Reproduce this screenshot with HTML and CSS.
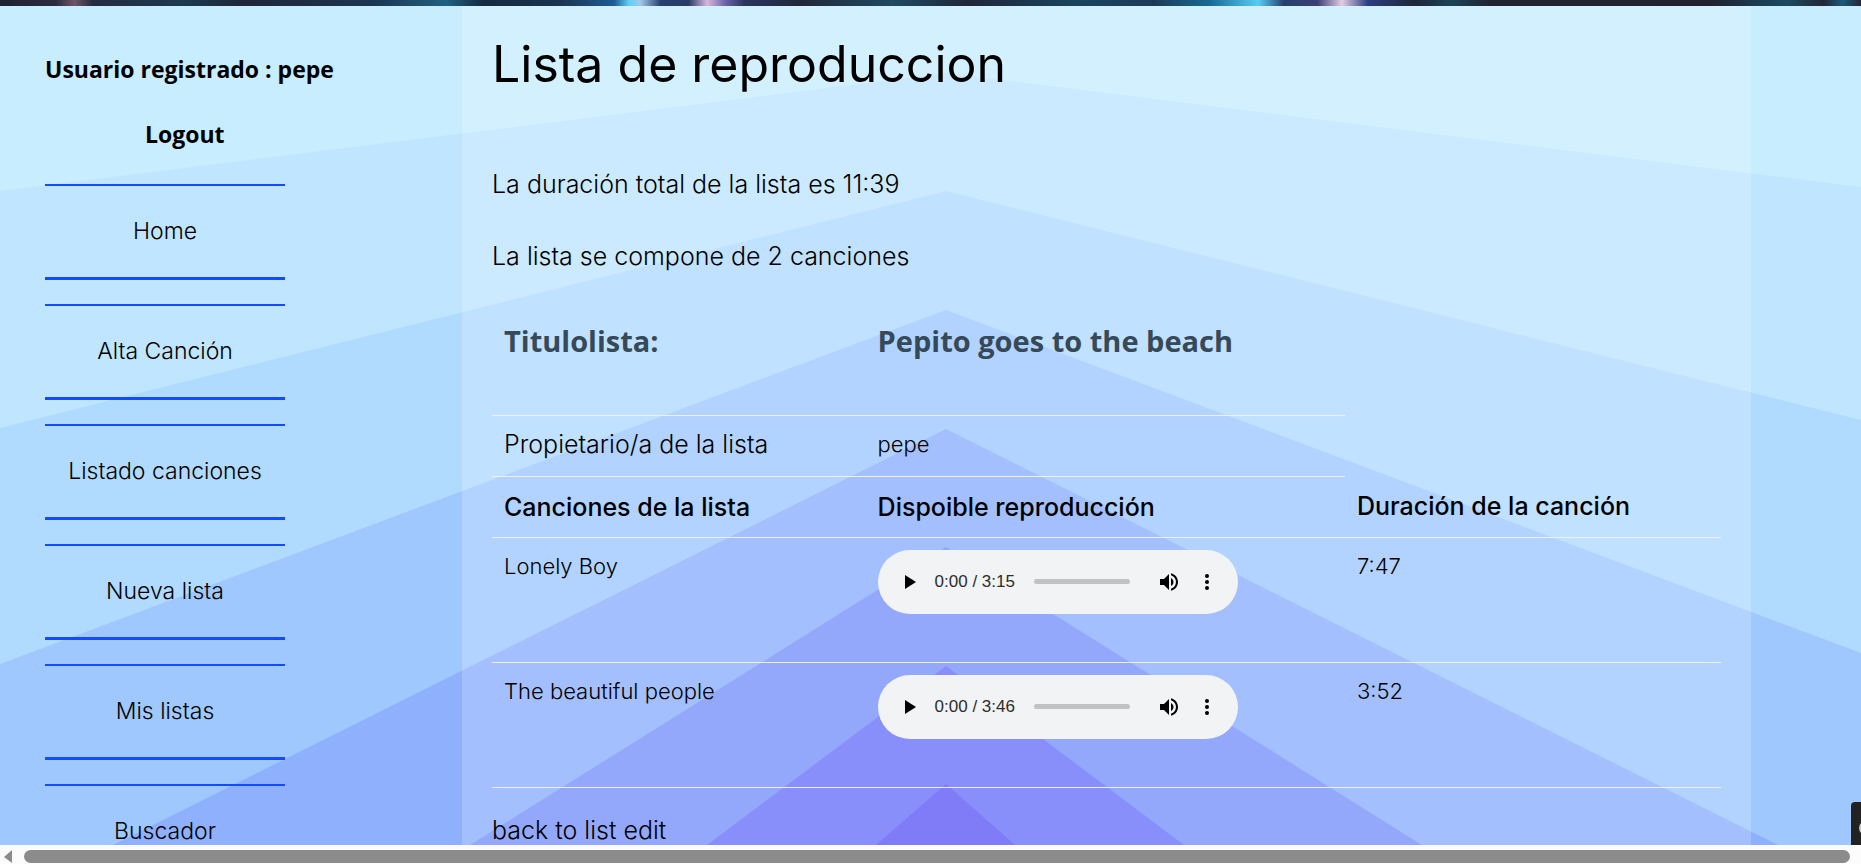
FILE: index.html
```html
<!DOCTYPE html>
<html lang="es">
<head>
<meta charset="utf-8">
<title>Lista de reproduccion</title>
<link rel="stylesheet" href="styles.css">
</head>
<body>
<div class="hero"></div>
<div class="page">
  <svg class="peaks" viewBox="0 0 1861 839" preserveAspectRatio="none" aria-hidden="true">
    <path fill="#c0e5ff" d="M0 185L946 67L1861 181V839H0z"/>
    <path fill="#b1daff" d="M0 422L946 185L1861 414V839H0z"/>
    <path fill="#9fc8ff" d="M0 658L946 304L1861 647V839H0z"/>
    <path fill="#8eb0fd" d="M113 839L946 423L1778 839z"/>
    <path fill="#7a93fa" d="M470 839L946 541L1422 839z"/>
    <path fill="#6b73fa" d="M707 839L946 660L1184 839z"/>
    <path fill="#615bf6" d="M876 839L946 778L1015 839z"/>
  </svg>
  <aside class="sidebar">
    <p class="user">Usuario registrado : pepe</p>
    <a class="logout" href="#logout">Logout</a>
    <nav class="menu">
      <a href="#home">Home</a>
      <a href="#alta">Alta Canción</a>
      <a href="#listado">Listado canciones</a>
      <a href="#nueva">Nueva lista</a>
      <a href="#mis">Mis listas</a>
      <a href="#buscador">Buscador</a>
    </nav>
  </aside>
  <main class="content">
    <h1>Lista de reproduccion</h1>
    <p>La duración total de la lista es 11:39</p>
    <p>La lista se compone de 2 canciones</p>
    <table class="playlist">
      <colgroup><col class="col-name"><col class="col-player"><col></colgroup>
      <tr class="title"><th scope="row">Titulolista:</th><th>Pepito goes to the beach</th></tr>
      <tr class="owner"><td class="label">Propietario/a de la lista</td><td>pepe</td></tr>
      <tr class="heads"><th scope="col">Canciones de la lista</th><th scope="col">Dispoible reproducción</th><th scope="col">Duración de la canción</th></tr>
      <tr class="song">
        <td>Lonely Boy</td>
        <td class="media">
          <div class="player">
            <button type="button" aria-label="Reproducir"><svg width="11" height="14" viewBox="0 0 11 14"><path d="M0 0L11 7L0 14z"/></svg></button>
            <span class="time">0:00 / 3:15</span>
            <input type="range" aria-label="Posición de Lonely Boy" value="0">
            <button type="button" class="volume" aria-label="Volumen"><svg width="18" height="18" viewBox="3 3 18 18"><path d="M3 9v6h4l5 5V4L7 9H3zm13.500 3c0-1.770-1.020-3.290-2.500-4.030v8.050c1.480-.73 2.500-2.250 2.500-4.020zM14 3.230v2.060c2.890.86 5 3.540 5 6.710s-2.110 5.850-5 6.710v2.060c4.010-.91 7-4.490 7-8.770s-2.990-7.860-7-8.770z"/></svg></button>
            <button type="button" class="more" aria-label="Más opciones"><svg width="4" height="16" viewBox="0 0 4 16"><circle cx="2" cy="2" r="2"/><circle cx="2" cy="8" r="2"/><circle cx="2" cy="14" r="2"/></svg></button>
          </div>
        </td>
        <td>7:47</td>
      </tr>
      <tr class="song">
        <td>The beautiful people</td>
        <td class="media">
          <div class="player">
            <button type="button" aria-label="Reproducir"><svg width="11" height="14" viewBox="0 0 11 14"><path d="M0 0L11 7L0 14z"/></svg></button>
            <span class="time">0:00 / 3:46</span>
            <input type="range" aria-label="Posición de The beautiful people" value="0">
            <button type="button" class="volume" aria-label="Volumen"><svg width="18" height="18" viewBox="3 3 18 18"><path d="M3 9v6h4l5 5V4L7 9H3zm13.500 3c0-1.770-1.020-3.290-2.500-4.030v8.050c1.480-.73 2.500-2.250 2.500-4.020zM14 3.230v2.060c2.890.86 5 3.540 5 6.710s-2.110 5.850-5 6.710v2.060c4.010-.91 7-4.490 7-8.770s-2.990-7.860-7-8.770z"/></svg></button>
            <button type="button" class="more" aria-label="Más opciones"><svg width="4" height="16" viewBox="0 0 4 16"><circle cx="2" cy="2" r="2"/><circle cx="2" cy="8" r="2"/><circle cx="2" cy="14" r="2"/></svg></button>
          </div>
        </td>
        <td>3:52</td>
      </tr>
    </table>
    <a class="back" href="#edit">back to list edit</a>
  </main>
  <div class="side-tab"><svg width="10" height="43" viewBox="0 0 10 43"><circle cx="15" cy="26" r="6" fill="none" stroke="#ccc" stroke-width="2"/></svg></div>
</div>
<div class="scrollbar"><svg width="8" height="13" viewBox="0 0 8 13"><path fill="#8b8b8b" d="M0 7L8 0V13z"/></svg><div class="thumb"></div></div>
</body>
</html>
```
FILE: styles.css
```css
* { box-sizing: border-box; }

body {
  margin: 0;
  height: 100vh;
  display: flex;
  flex-direction: column;
  overflow: hidden;
  font-family: Inter, "Open Sans", sans-serif;
  font-weight: 300;
  font-size: 22px;
  color: #000;
}

a { color: inherit; text-decoration: none; }

.hero {
  flex: none;
  height: 6px;
  background: linear-gradient(to right,
    #1f2233 0, #2b2b3e 3%, #6d5566 4%, #252b40 5%, #1b3a50 10%, #1f2638 13%,
    #1c3550 20%, #1f6080 24%, #16293f 26%, #1b3350 30%, #1d5c94 33%, #5fd0f5 33.8%,
    #a5c8ea 34.4%, #27406f 35.5%, #2a3a68 37%, #d5b8dc 38%, #6a60a8 39%, #2a3560 40%, #22273a 43%,
    #1f4a62 48%, #20263a 52%, #194560 58%, #1c3a58 62%, #176a94 65%, #58ccf5 67.6%,
    #25406d 69%, #3c3f74 70.8%, #e2cbe4 72.1%, #2a3f80 73.5%, #20263a 76%,
    #1c4458 78%, #202432 80%, #1f2331 92%, #1b4a62 96%, #232638 98%, #1a5a78 99%, #232638 100%);
}

.page {
  position: relative;
  flex: 1;
  min-height: 0;
  overflow: hidden;
  display: grid;
  grid-template-columns: 462px minmax(0, 1fr) 110px;
  background: #c8edff;
}

.peaks {
  position: absolute;
  inset: 0;
  width: 100%;
  height: 100%;
}

.sidebar {
  position: relative;
  padding: 43px 45px 0;
}

.user, .logout {
  margin: 0;
  font-family: "Open Sans", "Noto Sans", sans-serif;
  font-weight: 700;
  font-size: 23px;
  line-height: 40px;
}

.user { white-space: nowrap; }

.logout {
  display: block;
  margin: 25px 0 30px 100px;
}

.menu {
  width: 240px;
  display: grid;
  gap: 24px;
}

.menu a {
  height: 96px;
  border-top: 2px solid #144bff;
  border-bottom: 3px solid #144bff;
  text-align: center;
  font-size: 23px;
  line-height: 91px;
}

.content {
  position: relative;
  padding: 24px 30px 0;
  background: rgba(255, 255, 255, 0.2);
}

h1 {
  margin: 0 0 62px;
  font-weight: 400;
  font-size: 50px;
  line-height: 68px;
}

.content p {
  margin: 0 0 24px;
  font-size: 25px;
  line-height: 48px;
}

.playlist {
  width: 100%;
  border-collapse: collapse;
  table-layout: fixed;
}

.col-name { width: 30.4%; }
.col-player { width: 39%; }

.playlist td, .playlist th {
  padding: 10px 12px 0;
  text-align: left;
  vertical-align: top;
  border-bottom: 1px solid #f0eff0;
  line-height: 36px;
}

.playlist .media { padding-top: 12px; }

.playlist .title th {
  height: 111px;
  padding-top: 19px;
  font-family: "Open Sans", "Noto Sans", sans-serif;
  font-weight: 700;
  font-size: 29px;
  color: #364958;
}

.playlist .owner td, .playlist .heads th { height: 61px; }
.playlist .label { font-size: 25px; }

.playlist .heads th {
  padding-top: 12px;
  font-weight: 500;
  font-size: 25px;
}

.playlist .song td { height: 125px; }

.back {
  display: block;
  margin-top: 18px;
  font-size: 25px;
  line-height: 48px;
}

.player {
  width: 360px;
  height: 64px;
  padding: 0 29px 0 27px;
  display: flex;
  align-items: center;
  border-radius: 32px;
  background: #f1f3f4;
}

.player button {
  display: flex;
  padding: 0;
  border: 0;
  background: none;
}

.time {
  margin: 0 19px;
  font-family: "Liberation Sans", Arial, sans-serif;
  font-weight: 400;
  font-size: 17px;
  line-height: 24px;
  color: #2c2d2d;
  white-space: nowrap;
}

.player input {
  appearance: none;
  flex: 1;
  min-width: 0;
  height: 5px;
  margin: 0;
  border-radius: 3px;
  background: #c1c2c3;
}

.player input::-webkit-slider-thumb {
  appearance: none;
  width: 0;
  height: 0;
}

.player .volume { margin-left: 30px; }
.player .more { margin-left: 27px; }

.side-tab {
  position: absolute;
  right: 0;
  bottom: 0;
  height: 43px;
  width: 10px;
  border-radius: 4px 0 0 0;
  background: #222;
}

.scrollbar {
  flex: none;
  height: 19px;
  padding: 5px 11px 1px 4px;
  display: flex;
  gap: 12px;
  background: #fcfcfc;
}

.thumb {
  flex: 1;
  border-radius: 7px;
  background: #8b8b8b;
}
```
